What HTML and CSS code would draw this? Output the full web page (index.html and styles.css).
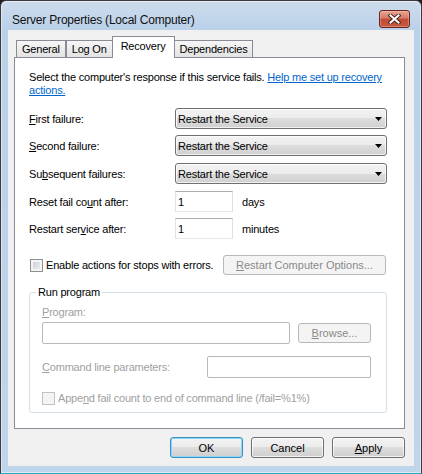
FILE: index.html
```html
<!DOCTYPE html>
<html lang="en">
  <head>
    <meta charset="UTF-8" />
    <title>Server Properties (Local Computer)</title>
    <link rel="stylesheet" href="styles.css">
  </head>

  <body>
    <div class="window">
      <div class="titlebar">
        <span class="title">Server Properties (Local Computer)</span>
        <span class="close">
          <svg width="13" height="10" viewBox="0 0 13 10">
            <path d="M2.5 1.5 L10.5 8.5 M10.5 1.5 L2.5 8.5" stroke="#4a2520" stroke-width="4" stroke-linecap="square" fill="none"/>
            <path d="M2.5 1.5 L10.5 8.5 M10.5 1.5 L2.5 8.5" stroke="#fff" stroke-width="2" stroke-linecap="square" fill="none"/>
          </svg>
        </span>
      </div>

      <div class="client">
        <div class="tabs">
          <span class="tab">General</span>
          <span class="tab">Log On</span>
          <span class="tab active">Recovery</span>
          <span class="tab">Dependencies</span>
        </div>

        <div class="panel">
          <p class="intro">Select the computer's response if this service fails. <a href="#">Help me set up recovery<br>actions.</a></p>

          <div class="row r1">
            <label><u>F</u>irst failure:</label>
            <div class="combo">Restart the Service<svg class="arrow" width="7" height="4" viewBox="0 0 7 4"><polygon points="0,0 7,0 3.5,4" fill="#000"/></svg></div>
          </div>
          <div class="row r2">
            <label><u>S</u>econd failure:</label>
            <div class="combo">Restart the Service<svg class="arrow" width="7" height="4" viewBox="0 0 7 4"><polygon points="0,0 7,0 3.5,4" fill="#000"/></svg></div>
          </div>
          <div class="row r3">
            <label>Su<u>b</u>sequent failures:</label>
            <div class="combo">Restart the Service<svg class="arrow" width="7" height="4" viewBox="0 0 7 4"><polygon points="0,0 7,0 3.5,4" fill="#000"/></svg></div>
          </div>

          <div class="row r4">
            <label>Reset fail co<u>u</u>nt after:</label>
            <input class="edit" type="text" value="1">
            <span class="unit">days</span>
          </div>
          <div class="row r5">
            <label>Restart ser<u>v</u>ice after:</label>
            <input class="edit" type="text" value="1">
            <span class="unit">minutes</span>
          </div>

          <div class="row opts">
            <span class="check"><span class="box"></span>Enable actions for stops with errors.</span>
            <button class="btn restart" disabled><u>R</u>estart Computer Options...</button>
          </div>

          <fieldset class="group">
            <legend>Run program</legend>
            <div class="off"><u>P</u>rogram:</div>
            <div class="prog">
              <input class="edit wide" type="text" disabled>
              <button class="btn browse" disabled><u>B</u>rowse...</button>
            </div>
            <div class="cmd">
              <span class="off cmd-label"><u>C</u>ommand line parameters:</span>
              <input class="edit params" type="text" disabled>
            </div>
            <div class="check append off"><span class="box"></span>Appe<u>n</u>d fail count to end of command line (/fail=%1%)</div>
          </fieldset>
        </div>

        <div class="actions">
          <button class="btn default">OK</button>
          <button class="btn">Cancel</button>
          <button class="btn"><u>A</u>pply</button>
        </div>
      </div>
    </div>
  </body>
</html>
```

FILE: styles.css
```css
html, body {
  margin: 0;
  background: #1c1c1c;
}
.window {
  width: 422px;
  height: 474px;
  box-sizing: border-box;
  display: flex;
  flex-direction: column;
  padding: 0 7px 7px;
  border: 1px solid #3c3c3c;
  border-bottom-color: #2fa9bd;
  border-radius: 6px 6px 0 0;
  background: linear-gradient(#cddcec, #bad1ea 29px, #bfd5ec);
  box-shadow: inset 0 0 0 1px rgba(255,255,255,0.45);
  font: 11px "Liberation Sans", Arial, sans-serif;
  letter-spacing: -0.2px;
  color: #000;
}
.titlebar {
  height: 29px;
  display: flex;
  justify-content: space-between;
  align-items: flex-start;
}
.title {
  margin: 13px 0 0 4px;
  font-size: 12px;
  line-height: 13px;
  color: #111;
}
.close {
  width: 31px;
  height: 18px;
  box-sizing: border-box;
  margin: 9px 4px 0 0;
  border: 1px solid #6b2419;
  border-radius: 3px;
  background: linear-gradient(#e8a493, #d47a66 45%, #c04a34 50%, #c65a44);
  box-shadow: inset 0 0 0 1px rgba(255,210,200,0.35);
  display: flex;
  align-items: center;
  justify-content: center;
}
.client {
  flex: 1;
  background: #f0f0f0;
  display: flex;
  flex-direction: column;
}

/* tab strip */
.tabs {
  display: flex;
  align-items: flex-end;
  height: 20px;
  margin-top: 7px;
  padding-left: 8px;
}
.tab {
  height: 16px;
  line-height: 16px;
  padding: 0 5px;
  border: 1px solid #898c95;
  border-bottom: none;
  background: linear-gradient(#f6f6f6, #e3e3e3);
}
.tab.active {
  position: relative;
  z-index: 1;
  height: 20px;
  line-height: 18px;
  margin: 0 -1px -1px;
  padding: 0 8px 1px;
  background: #fff;
}
.panel {
  margin-left: 6px;
  width: 391px;
  height: 372px;
  box-sizing: border-box;
  padding: 13px 17px 0 14px;
  border: 1px solid #898c95;
  background: #fff;
}
.intro {
  margin: 0;
  line-height: 13px;
}
.intro a {
  color: #0066cc;
}

/* label + control rows */
.row {
  display: flex;
  align-items: center;
}
.row label {
  flex: 0 0 146px;
}
.r1 { margin-top: 11px; }
.r2 { margin-top: 6px; }
.r3 { margin-top: 7px; }
.r4 { margin-top: 7px; }
.r5 { margin-top: 6px; }
.opts { margin-top: 16px; }

.combo {
  width: 212px;
  height: 21px;
  box-sizing: border-box;
  display: flex;
  align-items: center;
  padding-left: 2px;
  border: 1px solid #707070;
  border-radius: 3px;
  background: linear-gradient(#f3f3f3, #ebebeb 50%, #dddddd 50%, #d0d0d0);
  box-shadow: inset 0 0 0 1px rgba(255,255,255,0.7);
}
.arrow {
  margin-left: auto;
  margin-right: 4px;
}
.edit {
  width: 58px;
  height: 21px;
  box-sizing: border-box;
  margin: 0;
  padding: 0 2px;
  border: 1px solid;
  border-color: #abadb3 #dbdfe6 #e3e9ef #e2e3ea;
  font: inherit;
  color: #000;
  background: #fff;
  outline: none;
}
.edit:disabled {
  border-color: #b8b8b8;
  border-radius: 2px;
  background: #fff;
}
.unit {
  margin-left: 9px;
}

.check {
  display: flex;
  align-items: center;
}
.box {
  width: 13px;
  height: 13px;
  box-sizing: border-box;
  margin: 0 3px 0 1px;
  border: 1px solid #8e8f8f;
  background: linear-gradient(135deg, #c7cbd1, #f3f3f3);
  box-shadow: inset 0 0 0 2px #f4f4f4;
}
.off {
  color: #a0a0a0;
}
.off .box {
  margin-left: 0;
  border-color: #c2c2c2;
  background: #f4f4f4;
  box-shadow: none;
}

/* push buttons */
.btn {
  height: 21px;
  box-sizing: border-box;
  margin: 0;
  padding: 0;
  border: 1px solid #707070;
  border-radius: 3px;
  background: linear-gradient(#f3f3f3, #ebebeb 50%, #dddddd 50%, #cfcfcf);
  box-shadow: inset 0 0 0 1px rgba(255,255,255,0.7);
  font: inherit;
  color: #000;
}
.btn:disabled {
  border-color: #b5b9bc;
  background: #f4f4f4;
  box-shadow: none;
  color: #8a8a8a;
}
.btn.default {
  border-color: #3c8fc4;
  box-shadow: inset 0 0 0 1px #8ad8fa;
}
.restart {
  width: 163px;
  height: 20px;
  margin-left: auto;
  margin-right: 1px;
}

/* Run program group */
.group {
  margin: 11px 0 0;
  padding: 7px 12px 7px;
  min-width: 0;
  border: 1px solid #d5dfe5;
  border-radius: 3px;
}
.group legend {
  margin-left: -6px;
  padding: 0 2px;
  line-height: 13px;
}
.group .off {
  line-height: 13px;
}
.prog {
  display: flex;
  align-items: center;
  gap: 8px;
  margin-top: 3px;
}
.edit.wide {
  width: 248px;
  height: 22px;
}
.browse {
  width: 73px;
  height: 20px;
}
.cmd {
  display: flex;
  align-items: center;
  margin-top: 12px;
}
.cmd-label {
  flex: 0 0 165px;
}
.edit.params {
  width: 164px;
  height: 22px;
}
.append {
  margin-top: 14px;
}

.actions {
  display: flex;
  justify-content: flex-end;
  gap: 8px;
  margin-top: 8px;
  width: 397px;
}
.actions .btn {
  width: 73px;
}
```
